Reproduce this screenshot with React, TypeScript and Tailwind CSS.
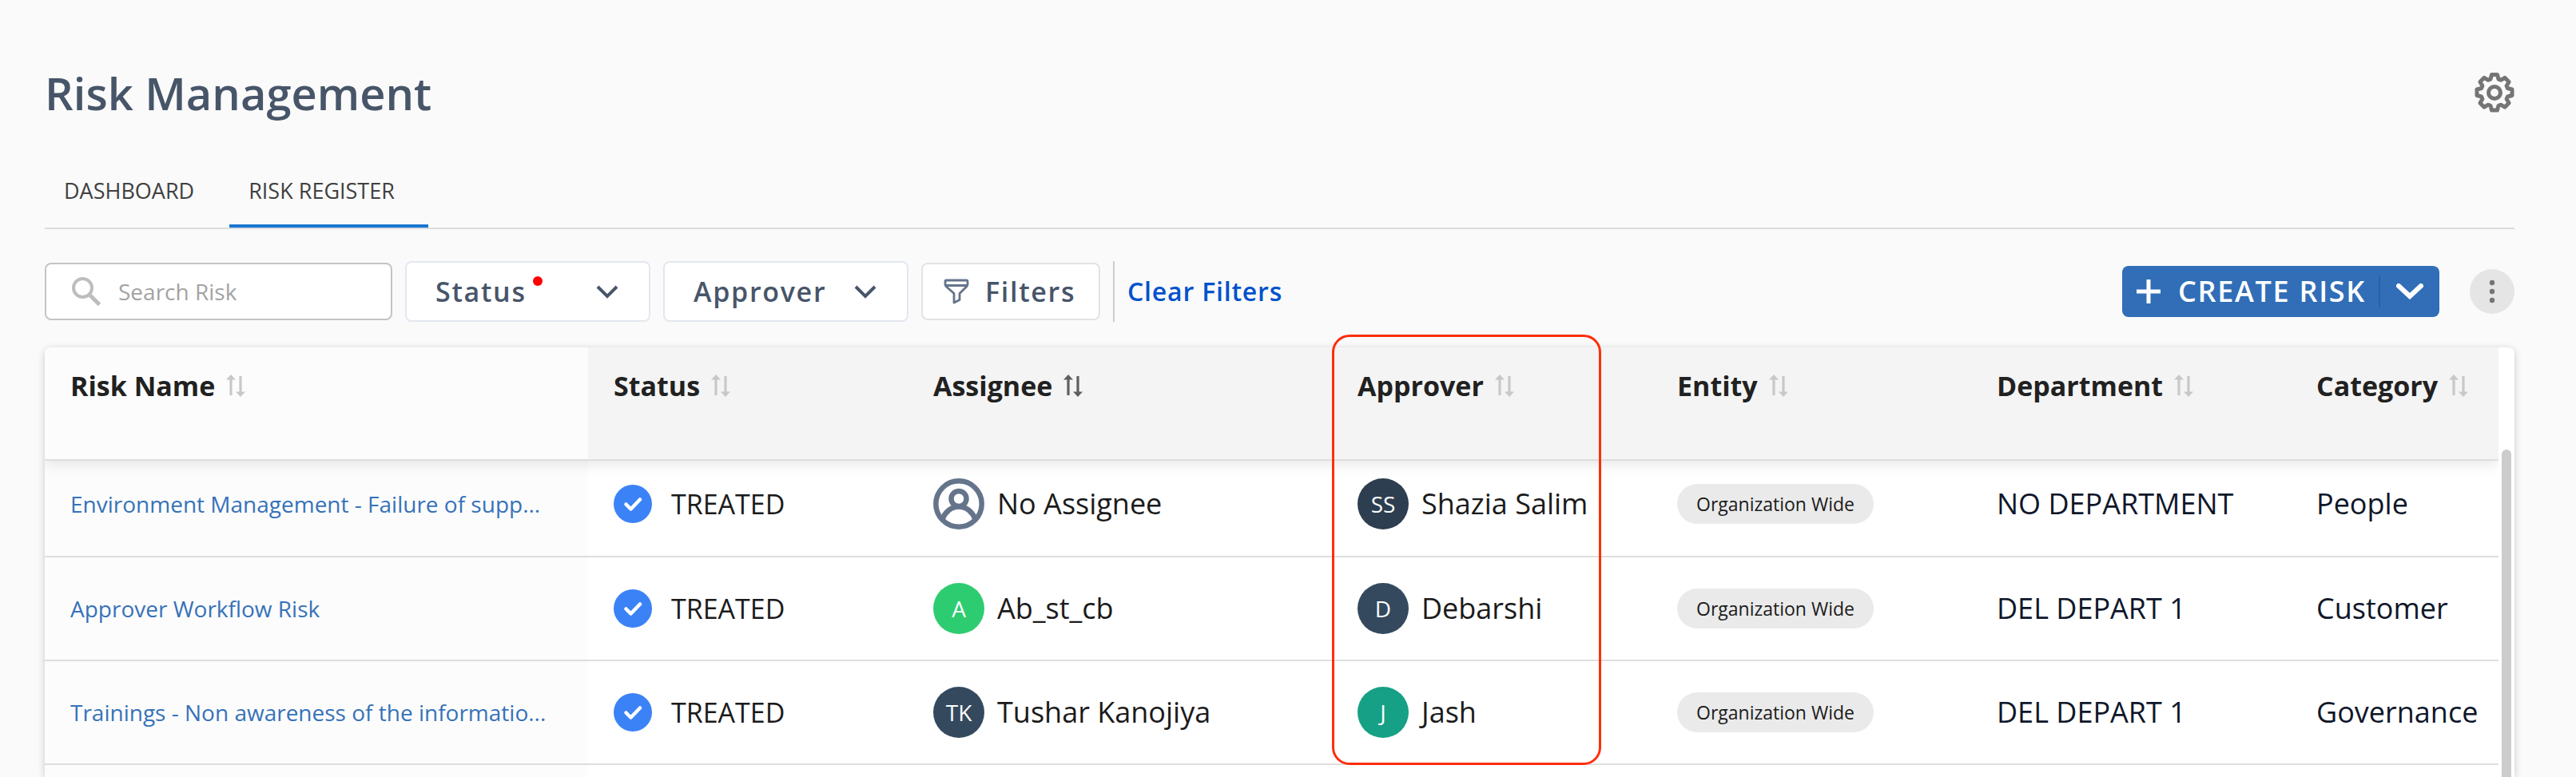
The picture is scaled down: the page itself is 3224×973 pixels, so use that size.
import React from "react";

type Person = { name: string; initials?: string; bg?: string };
type Risk = { name: string; assignee: Person; approver: Person; department: string; category: string };

const risks: Risk[] = [
  {
    name: "Environment Management - Failure of supp...",
    assignee: { name: "No Assignee" },
    approver: { name: "Shazia Salim", initials: "SS", bg: "bg-[#2c3e50]" },
    department: "NO DEPARTMENT",
    category: "People",
  },
  {
    name: "Approver Workflow Risk",
    assignee: { name: "Ab_st_cb", initials: "A", bg: "bg-[#2ecc71]" },
    approver: { name: "Debarshi", initials: "D", bg: "bg-[#34495e]" },
    department: "DEL DEPART 1",
    category: "Customer",
  },
  {
    name: "Trainings - Non awareness of the informatio...",
    assignee: { name: "Tushar Kanojiya", initials: "TK", bg: "bg-[#34495e]" },
    approver: { name: "Jash", initials: "J", bg: "bg-[#16a085]" },
    department: "DEL DEPART 1",
    category: "Governance",
  },
];

const columns = ["Risk Name", "Status", "Assignee", "Approver", "Entity", "Department", "Category"];

function GearIcon() {
  return (
    <svg viewBox="0 0 50 50" className="size-[50px]" fill="none" stroke="#757575" strokeWidth="5" strokeLinejoin="round">
      <path d="M21.5 2.5h7l1.5 5.6 2.9 1.2 5-2.9 5.2 5.1-3 5 1.3 3 5.6 1.5v7.5l-5.6 1.5-1.3 3 3 5-5.2 5.1-5-2.9-2.9 1.2-1.5 5.6h-7l-1.5-5.6-2.9-1.2-5 2.9-5.2-5.1 3-5-1.3-3-5.6-1.5v-7.5l5.6-1.5 1.3-3-3-5 5.2-5.1 5 2.9 2.9-1.2z" />
      <circle cx="25" cy="25" r="7.5" />
    </svg>
  );
}

function SortIcon({ active }: { active?: boolean }) {
  return (
    <svg viewBox="0 0 24 28" className="h-7 w-6 shrink-0" fill={active ? "#5f5f5f" : "#c8c8c8"}>
      <path d="M6 0l6 6.5H7.6V26H4.4V6.5H0z" />
      <path d="M18 28l6-6.5h-4.4V2h-3.2v19.5H12z" />
    </svg>
  );
}

function ChevronDown({ className }: { className: string }) {
  return (
    <svg viewBox="0 0 28 18" className={className} fill="none" stroke="currentColor">
      <path d="M2 3l12 12L26 3" />
    </svg>
  );
}

function Avatar({ person }: { person: Person }) {
  return (
    <div className="flex items-center gap-4 whitespace-nowrap">
      {person.initials ? (
        <span className={`flex size-16 shrink-0 items-center justify-center rounded-full text-[28px] text-white ${person.bg}`}>
          {person.initials}
        </span>
      ) : (
        <svg viewBox="0 0 64 64" className="size-16 shrink-0" fill="none" stroke="#64748b" strokeWidth="6.5">
          <circle cx="32" cy="32" r="28.7" />
          <circle cx="32" cy="25.5" r="9.5" />
          <path d="M11.5 51c3.5-9 11-15.5 20.5-15.5S49 42 52.5 51" />
        </svg>
      )}
      {person.name}
    </div>
  );
}

function TreatedStatus() {
  return (
    <div className="flex items-center gap-6 text-[34px]">
      <svg viewBox="0 0 48 48" className="size-12 shrink-0">
        <circle cx="24" cy="24" r="24" fill="#3b82f6" />
        <path d="M15.5 24.5l6 6L33 18.5" fill="none" stroke="#fff" strokeWidth="4.5" strokeLinecap="round" strokeLinejoin="round" />
      </svg>
      TREATED
    </div>
  );
}

export default function App() {
  return (
    <div className="flex h-screen flex-col overflow-hidden bg-[#fafafa] pr-[77px] pl-14 font-['Open_Sans',sans-serif] text-[#1b1b1b]">
      <header className="flex items-center justify-between pt-[74px]">
        <h1 className="text-[56px] leading-[84px] font-semibold text-[#475569]">Risk Management</h1>
        <button type="button" aria-label="Settings">
          <GearIcon />
        </button>
      </header>

      <nav className="mt-9 flex shrink-0 border-b-2 border-[#dcdcdc] text-[27px] leading-[42px] text-[#404040]">
        <a href="#dashboard" className="px-6 pt-6 pb-[25px]">DASHBOARD</a>
        <a href="#register" className="ml-5 border-b-4 border-[#1976d2] pt-6 pr-[42px] pb-[21px] pl-6">RISK REGISTER</a>
      </nav>

      <div className="mt-10 flex h-[76px] shrink-0 items-center gap-4 text-[34px] font-semibold tracking-wider text-[#475569]">
        <label className="flex h-[72px] w-[435px] items-center gap-[22px] rounded-lg border-2 border-[#c4c4c4] bg-white px-8">
          <svg viewBox="0 0 36 36" className="size-9 shrink-0" fill="none" stroke="#bdbdbd" strokeWidth="4">
            <circle cx="13.5" cy="13.5" r="11.5" />
            <path d="M22 22l12.5 12.5" strokeWidth="5" />
          </svg>
          <input type="text" aria-label="Search Risk" placeholder="Search Risk" className="w-full min-w-0 bg-transparent text-[28px] font-normal tracking-normal outline-none placeholder:text-[#a3a3a3]" />
        </label>
        <button type="button" className="flex h-[76px] w-[307px] items-center justify-between rounded-lg border-2 border-[#e2e8f0] bg-white pr-[38px] pl-9">
          <span className="relative">
            Status
            <span className="absolute top-1.5 -right-5 size-3 rounded-full bg-[#ff0000]" />
          </span>
          <ChevronDown className="h-[18px] w-7 stroke-4" />
        </button>
        <button type="button" className="flex h-[76px] w-[307px] items-center justify-between rounded-lg border-2 border-[#e2e8f0] bg-white pr-[38px] pl-9">
          Approver
          <ChevronDown className="h-[18px] w-7 stroke-4" />
        </button>
        <button type="button" className="flex h-[72px] w-56 items-center gap-5 rounded-lg border-2 border-[#e3e3e3] bg-white px-[26px]">
          <svg viewBox="0 0 32 32" className="size-8 shrink-0" fill="none" stroke="#64748b" strokeWidth="2.8" strokeLinejoin="round">
            <path d="M3.5 2h25A1.5 1.5 0 0 1 30 3.5V7c0 1-.4 2-1.2 2.8L20 18.5v8L13 30V18.5L3.2 9.8A4 4 0 0 1 2 7V3.5A1.5 1.5 0 0 1 3.5 2zM2.5 8.5h27" />
          </svg>
          Filters
        </button>
        <button type="button" className="h-[76px] border-l-2 border-[#cccccc] pl-4 text-[32px] tracking-wide text-[#0052cc]">Clear Filters</button>
        <div className="ml-auto flex h-16 items-center rounded-lg bg-[#316eb7] text-[36px] text-white">
          <button type="button" className="flex items-center gap-[22px] pr-4 pl-[18px]">
            <svg viewBox="0 0 30 30" className="size-[30px]" stroke="#fff" strokeWidth="5">
              <path d="M15 0v30M0 15h30" />
            </svg>
            CREATE RISK
          </button>
          <button type="button" aria-label="More create options" className="flex h-10 items-center border-l-2 border-[#2a5fa5] px-5">
            <svg viewBox="0 0 34 20" className="h-5 w-[34px]" fill="none" stroke="#fff" strokeWidth="6" strokeLinecap="round">
              <path d="M3 3l14 13L31 3" />
            </svg>
          </button>
        </div>
        <button type="button" aria-label="More actions" className="ml-[22px] flex size-14 items-center justify-center rounded-full bg-[#e5e5e5]">
          <svg viewBox="0 0 8 30" className="h-[30px] w-2" fill="#757575">
            <circle cx="4" cy="4" r="3.2" />
            <circle cx="4" cy="15" r="3.2" />
            <circle cx="4" cy="26" r="3.2" />
          </svg>
        </button>
      </div>

      <main className="relative mt-8 flex min-h-0 flex-1 rounded-t-lg bg-white shadow-[0_2px_10px_rgba(0,0,0,0.2)]">
        <div className="min-w-0 flex-1 overflow-hidden rounded-tl-lg">
          <table className="w-full table-fixed border-separate border-spacing-0 text-left text-[36px] leading-[48px]">
            <colgroup>
              <col className="w-[680px]" />
              <col className="w-[400px]" />
              <col className="w-[531px]" />
              <col className="w-[400px]" />
              <col className="w-[400px]" />
              <col className="w-[400px]" />
              <col />
            </colgroup>
            <thead className="relative shadow-[0_4px_16px_rgba(0,0,0,0.1)]">
              <tr className="text-[34px]">
                {columns.map((c) => (
                  <th key={c} className="h-[142px] border-b-2 border-[#dedede] bg-[#f4f4f4] px-8 pt-6 align-top font-bold text-[#212121] first:bg-[#fcfcfc]">
                    <button type="button" className="flex items-center gap-[14px] whitespace-nowrap">
                      {c}
                      <SortIcon active={c === "Assignee"} />
                    </button>
                  </th>
                ))}
              </tr>
            </thead>
            <tbody className="[&>tr>td]:h-[130px] [&>tr>td]:border-b-2 [&>tr>td]:border-[#dedede] [&>tr>td]:px-8 [&>tr:first-child>td]:h-[121px] [&>tr:first-child>td]:pb-3">
              {risks.map((r) => (
                <tr key={r.name}>
                  <td className="bg-[#fcfcfc]">
                    <a href="#risk" className="block whitespace-nowrap text-[28px] text-[#3672b9]">{r.name}</a>
                  </td>
                  <td><TreatedStatus /></td>
                  <td><Avatar person={r.assignee} /></td>
                  <td><Avatar person={r.approver} /></td>
                  <td>
                    <span className="flex h-[50px] w-fit items-center rounded-full bg-[#eaeaea] px-6 text-[23px] whitespace-nowrap">Organization Wide</span>
                  </td>
                  <td className="whitespace-nowrap text-[#0f172a]">{r.department}</td>
                  <td className="whitespace-nowrap text-[#0f172a]">{r.category}</td>
                </tr>
              ))}
              <tr>
                <td className="bg-[#fcfcfc]" />
                <td colSpan={6} />
              </tr>
            </tbody>
          </table>
        </div>
        <div className="flex w-5 flex-col px-1 pt-32">
          <div className="flex-1 rounded-t-full bg-[#cccccc]" />
        </div>
        <div className="pointer-events-none absolute -top-4 left-[1611px] h-[539px] w-[337px] rounded-[22px] border-3 border-[#ff2d0a]" />
      </main>
    </div>
  );
}
